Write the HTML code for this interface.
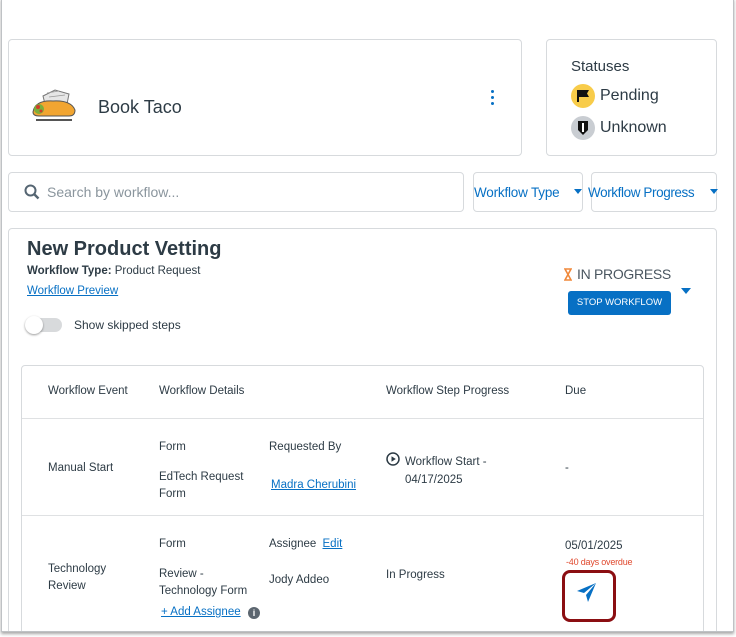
<!DOCTYPE html>
<html style="overflow:hidden;height:637px"><head><style>
*{margin:0;padding:0;box-sizing:border-box}
body{width:736px;height:637px;background:#fff;position:relative;overflow:hidden;font-family:"Liberation Sans",sans-serif;color:#2d3b45}
.a{position:absolute;white-space:nowrap}
.card{position:absolute;border:1px solid #d7dadd;border-radius:4px;background:#fff}
.lnk{color:#0770c4;text-decoration:underline}
.t{font-size:11.5px;color:#2d3b45}
#clip{position:absolute;left:0;top:0;width:736px;height:631px;overflow:hidden}
</style></head><body>
<div id="clip">
<div class="card" style="left:8px;top:39px;width:514px;height:117px"></div>
<svg class="a" style="left:29px;top:88px" width="50" height="36" viewBox="0 0 50 36">
<path d="M14 8 L26 2 L40 6 L38 16 L16 16Z" fill="#e6e6e6" stroke="#777" stroke-width="1"/>
<path d="M18 5 L30 3 M20 9 L36 7" stroke="#999" stroke-width="0.8"/>
<path d="M4 24 Q6 12 24 13 Q42 12 46 22 Q46 28 40 28 L10 28 Q4 28 4 24Z" fill="#f1a531" stroke="#555" stroke-width="1"/>
<circle cx="10" cy="21" r="5" fill="#7cae3a"/><circle cx="9" cy="19" r="2" fill="#d23c2a"/><circle cx="12" cy="23" r="1.5" fill="#d23c2a"/>
<rect x="7" y="31" width="36" height="2" fill="#555"/></svg>
<div class="a" style="left:98px;top:97px;font-size:18px">Book Taco</div>
<div class="a" style="left:491px;top:90px;width:3px">
<div style="width:3px;height:3px;border-radius:2px;background:#0770c4;margin-bottom:3px"></div>
<div style="width:3px;height:3px;border-radius:2px;background:#0770c4;margin-bottom:3px"></div>
<div style="width:3px;height:3px;border-radius:2px;background:#0770c4"></div></div>
<div class="card" style="left:546px;top:39px;width:171px;height:117px"></div>
<div class="a" style="left:571px;top:58px;font-size:15px">Statuses</div>
<div class="a" style="left:571px;top:84px;width:24px;height:24px;border-radius:12px;background:#f8cc4a"></div>
<svg class="a" style="left:577px;top:89px" width="13" height="14"><path d="M1 1V13" stroke="#111" stroke-width="2"/><path d="M2 1H12L10 4.5L12 8H2Z" fill="#111"/></svg>
<div class="a" style="left:600px;top:87px;font-size:16px">Pending</div>
<div class="a" style="left:571px;top:116px;width:24px;height:24px;border-radius:12px;background:#c9cdd2"></div>
<svg class="a" style="left:577px;top:120px" width="12" height="16"><path d="M1 1H11V10L6 15L1 10Z" fill="#111"/><path d="M6 3V12" stroke="#fff" stroke-width="2"/></svg>
<div class="a" style="left:600px;top:119px;font-size:16px">Unknown</div>
<div class="card" style="left:8px;top:172px;width:456px;height:40px"></div>
<svg class="a" style="left:24px;top:184px" width="16" height="16"><circle cx="6.5" cy="6.5" r="5" stroke="#556572" stroke-width="2" fill="none"/><path d="M10 10L14.5 14.5" stroke="#556572" stroke-width="2.4"/></svg>
<div class="a" style="left:47px;top:184px;font-size:14px;color:#8a959d">Search by workflow...</div>
<div class="card" style="left:473px;top:172px;width:110px;height:40px"></div>
<div class="a" style="left:474px;top:185px;font-size:13.5px;color:#0770c4;letter-spacing:-0.2px">Workflow Type</div>
<div class="a" style="left:574px;top:189px;border:4px solid transparent;border-top:5px solid #0770c4"></div>
<div class="card" style="left:591px;top:172px;width:126px;height:40px"></div>
<div class="a" style="left:588px;top:185px;font-size:13.5px;color:#0770c4;letter-spacing:-0.4px">Workflow Progress</div>
<div class="a" style="left:710px;top:189px;border:4px solid transparent;border-top:5px solid #0770c4"></div>
<div class="card" style="left:8px;top:228px;width:709px;height:420px"></div>
<div class="a" style="left:27px;top:238px;font-size:20px;font-weight:bold">New Product Vetting</div>
<div class="a t" style="left:27px;top:265px"><b>Workflow Type:</b> Product Request</div>
<div class="a lnk" style="left:27px;top:285px;font-size:11.5px">Workflow Preview</div>
<div class="a" style="left:27px;top:318px;width:35px;height:14px;border-radius:7px;background:#d8dadc"></div>
<div class="a" style="left:25px;top:316px;width:18px;height:18px;border-radius:9px;background:#fff;box-shadow:0 1px 2px rgba(0,0,0,.4)"></div>
<div class="a" style="left:74px;top:318px;font-size:12px">Show skipped steps</div>
<svg class="a" style="left:564px;top:268px" width="8" height="13"><path d="M1 1H7L4 6.5L7 12H1L4 6.5Z" fill="none" stroke="#f0883a" stroke-width="1.6"/></svg>
<div class="a" style="left:577px;top:266px;font-size:14px;color:#4a5660;letter-spacing:-0.3px">IN PROGRESS</div>
<div class="a" style="left:568px;top:291px;width:103px;height:24px;border-radius:3px;background:#0770c4;color:#fff;font-size:9.5px;text-align:center;line-height:24px">STOP WORKFLOW</div>
<div class="a" style="left:681px;top:288px;border:5px solid transparent;border-top:6px solid #0770c4"></div>
<div class="card" style="left:21px;top:365px;width:683px;height:300px"></div>
<div class="a" style="left:22px;top:418px;width:681px;height:1px;background:#dfe1e3"></div>
<div class="a" style="left:22px;top:515px;width:681px;height:1px;background:#dfe1e3"></div>
<div class="a t" style="left:48px;top:385px">Workflow Event</div>
<div class="a t" style="left:159px;top:385px">Workflow Details</div>
<div class="a t" style="left:386px;top:385px">Workflow Step Progress</div>
<div class="a t" style="left:565px;top:385px">Due</div>
<div class="a t" style="left:48px;top:462px">Manual Start</div>
<div class="a t" style="left:159px;top:441px">Form</div>
<div class="a t" style="left:159px;top:469px;line-height:17px">EdTech Request<br>Form</div>
<div class="a t" style="left:269px;top:441px">Requested By</div>
<div class="a t lnk" style="left:271px;top:479px;color:#0770c4">Madra Cherubini</div>
<svg class="a" style="left:386px;top:452px" width="14" height="14"><circle cx="7" cy="7" r="6" fill="none" stroke="#2d3b45" stroke-width="1.5"/><path d="M5.5 4.2L9.8 7L5.5 9.8Z" fill="#2d3b45"/></svg>
<div class="a t" style="left:405px;top:453px;line-height:18px">Workflow Start -<br>04/17/2025</div>
<div class="a t" style="left:565px;top:462px">-</div>
<div class="a t" style="left:48px;top:561px;line-height:17px">Technology<br>Review</div>
<div class="a t" style="left:159px;top:538px">Form</div>
<div class="a t" style="left:159px;top:566px;line-height:17px">Review -<br>Technology Form</div>
<div class="a t lnk" style="left:161px;top:606px;color:#0770c4">+ Add Assignee</div>
<div class="a" style="left:248px;top:607px;width:12px;height:12px;border-radius:6px;background:#5c6670;color:#fff;font-size:9px;font-weight:bold;text-align:center;line-height:12px">i</div>
<div class="a t" style="left:269px;top:538px">Assignee <span class="lnk" style="margin-left:3px">Edit</span></div>
<div class="a t" style="left:269px;top:574px">Jody Addeo</div>
<div class="a t" style="left:386px;top:569px">In Progress</div>
<div class="a t" style="left:565px;top:540px">05/01/2025</div>
<div class="a" style="left:566px;top:557px;font-size:9px;color:#e0492e;letter-spacing:-0.2px">-40 days overdue</div>
<div class="a" style="left:562px;top:570px;width:54px;height:52px;border:3px solid #8b0e12;border-radius:8px"></div>
<svg class="a" style="left:576px;top:581px" width="22" height="22" viewBox="0 0 22 22"><path d="M20 2L1 10L8 12L20 2L10 14L12 21Z" fill="#0770c4"/></svg>
</div>
<div style="position:absolute;left:1px;top:-2px;width:733px;height:634px;border:1px solid #bfc2c5;box-shadow:0 2px 3px rgba(0,0,0,.35)"></div>
</body></html>
